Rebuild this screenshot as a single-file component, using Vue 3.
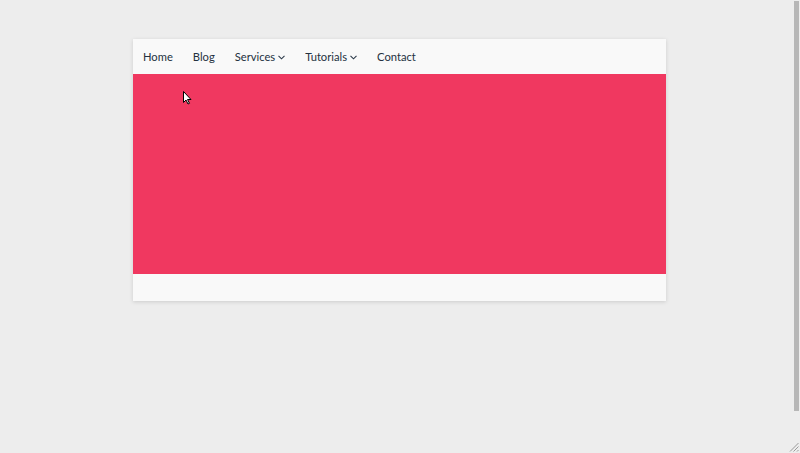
<script setup>
const items = [
  { label: 'Home', arrow: false },
  { label: 'Blog', arrow: false },
  { label: 'Services', arrow: true },
  { label: 'Tutorials', arrow: true },
  { label: 'Contact', arrow: false },
]
</script>

<template>
  <div class="page">
    <div class="card">
      <nav class="nav">
        <a v-for="item in items" :key="item.label" class="link">
          {{ item.label }}
          <svg v-if="item.arrow" class="chev" width="7" height="5" viewBox="0 0 7 5"><path d="M.5 .8 3.500 3.800 6.500 .8" fill="none" stroke="#2c3a4a" stroke-width="1.100"/></svg>
        </a>
      </nav>
      <div class="hero"></div>
      <div class="foot"></div>
    </div>
    <svg class="cursor" width="9" height="14" viewBox="0 0 9 14"><path d="M.5.5v11l2.500-2.500 2 4 1.500-.7-2-3.800h3.500z" fill="#fff" stroke="#000" stroke-width="1"/></svg>
    <div class="scrollbar"></div>
    <svg class="grip" width="10" height="10" viewBox="0 0 10 10"><path d="M9.500 1 1 9.500M9.500 4.500 4.500 9.500M9.500 8 8 9.500" stroke="#9a9a9a" stroke-width="1"/></svg>
  </div>
</template>

<style>
html, body { margin: 0; overflow: hidden; }
</style>

<style scoped>
.page {
  position: relative;
  box-sizing: border-box;
  width: 800px;
  height: 453px;
  padding: 39px 134px 0 133px;
  background: #ededed;
  font-family: Lato, sans-serif;
}
.card {
  background: #f9f9f9;
  box-shadow: 0 1px 4px rgba(0, 0, 0, 0.14);
}
.nav {
  display: flex;
  height: 35px;
  align-items: center;
  gap: 20px;
  padding-left: 10px;
}
.link {
  display: flex;
  align-items: center;
  gap: 3px;
  font-size: 11.2px;
  color: #24313f;
  white-space: nowrap;
}
.chev { margin-top: 1px; }
.hero {
  height: 200px;
  background: #f03860;
}
.foot { height: 27px; }
.cursor { position: absolute; left: 183px; top: 91px; }
.scrollbar {
  position: absolute;
  left: 794px;
  top: 1px;
  width: 5px;
  height: 410px;
  background: #b7b7b7;
}
.grip { position: absolute; right: 1px; bottom: 1px; }
</style>
